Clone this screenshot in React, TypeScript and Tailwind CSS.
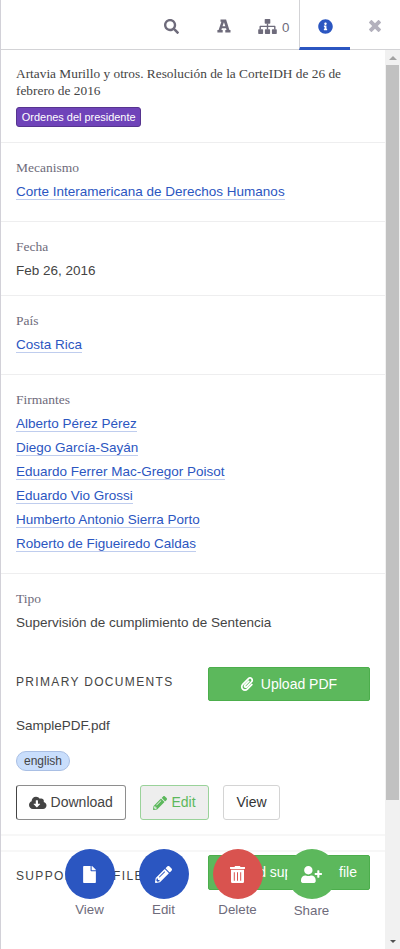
import type { ReactNode } from "react";
import {
  FaSearch, FaInfoCircle, FaPaperclip,
  FaCloudDownloadAlt, FaPencilAlt, FaFile, FaUserPlus,
} from "react-icons/fa";

const signers = [
  "Alberto Pérez Pérez",
  "Diego García-Sayán",
  "Eduardo Ferrer Mac-Gregor Poisot",
  "Eduardo Vio Grossi",
  "Humberto Antonio Sierra Porto",
  "Roberto de Figueiredo Caldas",
];

function FontIcon() {
  return (
    <svg viewBox="0 0 14 14" className="size-[14px]" fill="currentColor" fillRule="evenodd">
      <path d="M4.800 .5h4.300l3.300 10.500h1.100v2.500H8.300V11h1.200l-.5-1.700H4.900L4.400 11h1.300v2.500H.4V11h1.200L4.400 2.700h-.9V.5zM6.950 3.200L5.500 7.300h2.900z" />
    </svg>
  );
}

function TreeIcon() {
  return (
    <svg viewBox="0 0 19 15" className="h-[15px] w-[19px] shrink-0" fill="currentColor">
      <rect x="6.700" y="0" width="5.600" height="4.800" rx=".7" />
      <rect x=".2" y="10.200" width="4.900" height="4.800" rx=".7" />
      <rect x="6.900" y="10.200" width="5.200" height="4.800" rx=".7" />
      <rect x="13.900" y="10.200" width="4.900" height="4.800" rx=".7" />
      <path d="M8.800 4.500h1.400v2.200h6.300c.6 0 1 .4 1 1v2.800h-1.400V8.100h-5.900v2.400H8.800V8.100H2.900v2.400H1.500V7.700c0-.6.4-1 1-1h6.300z" />
    </svg>
  );
}

function CloseIcon() {
  return (
    <svg viewBox="0 0 384 512" className="h-4 w-3" fill="currentColor">
      <path d="M323.100 441l53.900-53.900c9.400-9.400 9.400-24.500 0-33.900L279.800 256l97.200-97.200c9.400-9.400 9.400-24.500 0-33.900L323.100 71c-9.400-9.400-24.500-9.400-33.900 0L192 168.200 94.800 71c-9.400-9.400-24.500-9.400-33.900 0L7 124.900c-9.400 9.400-9.400 24.500 0 33.900l97.200 97.200L7 353.200c-9.400 9.400-9.400 24.500 0 33.900L60.900 441c9.400 9.400 24.500 9.400 33.900 0l97.200-97.200 97.200 97.200c9.400 9.400 24.500 9.400 33.900 0z" />
    </svg>
  );
}

function TrashIcon() {
  return (
    <svg viewBox="0 0 15 17" className="h-[17px] w-[15px]" fill="currentColor" fillRule="evenodd">
      <path d="M.4 1h4.100l.4-.7C5 .1 5.200 0 5.400 0h4.200c.2 0 .4.1.5.3l.4.700h4.100c.2 0 .4.2.4.4v1.100c0 .2-.2.400-.4.400H.4C.2 2.900 0 2.700 0 2.500V1.400C0 1.200.2 1 .4 1z" />
      <path d="M1 3.800h13v11.600c0 .9-.7 1.600-1.600 1.600H2.600C1.700 17 1 16.300 1 15.400zM3.800 6.200v8.600h1V6.200zm3.200 0v8.600h1V6.200zm3.200 0v8.600h1V6.200z" />
    </svg>
  );
}

function Value({ children, link }: { children: ReactNode; link?: boolean }) {
  return (
    <div className="h-6 whitespace-nowrap text-[13.5px] leading-[17px] text-[#444]">
      {link ? (
        <a className="inline-block h-[17px] border-b border-[#bfcdee] leading-[17px] text-[#2b56c1]">{children}</a>
      ) : children}
    </div>
  );
}

function Field({ label, className, children }: { label: string; className: string; children: ReactNode }) {
  return (
    <div className={"shrink-0 pl-[15px] pr-4 pt-[16px] " + className}>
      <div className="mb-[6px] h-[18px] font-['Liberation_Serif',serif] text-[13.5px] leading-[18px] text-[#6e6b7b]">{label}</div>
      {children}
    </div>
  );
}

function Action({ label, circle, low, children }: { label: string; circle: string; low?: boolean; children: ReactNode }) {
  return (
    <div className="flex w-[50px] flex-col items-center">
      <div className={"flex size-[50px] items-center justify-center rounded-full text-white " + circle}>{children}</div>
      <div className={"text-[13.3px] leading-[17px] text-[#6e6b7b] " + (low ? "mt-[3px]" : "mt-[2px]")}>{label}</div>
    </div>
  );
}

export default function App() {
  return (
    <div className="relative flex h-[949px] w-[400px] flex-col overflow-hidden border-l border-[#d2d1d8] bg-white font-['Liberation_Sans',Arial,sans-serif] text-[#444]">
      <header className="flex h-[50px] shrink-0 border-b border-[#d3d3d6] text-[#6e6b7b]">
        <div className="ml-[144px] flex w-[53px] items-center justify-center pt-[3px]"><FaSearch size={15} /></div>
        <div className="flex w-[52px] items-center justify-center pt-[3px]"><FontIcon /></div>
        <div className="flex w-[49px] items-center justify-end gap-[5px] pr-[9.5px] pt-[4px]">
          <TreeIcon />
          <span className="pt-[2px] text-[13.3px] leading-[17px]">0</span>
        </div>
        <div className="flex h-[50px] w-[51px] items-center justify-center border-b-[3px] border-l border-b-[#2b56c1] border-l-[#d3d3d6] pt-[5px] text-[#2b56c1]">
          <FaInfoCircle size={15} />
        </div>
        <div className="flex w-[49px] items-center justify-center pt-[2px] text-[#b3b1bd]"><CloseIcon /></div>
      </header>

      <div className="flex min-h-0 flex-1">
        <main className="flex w-[384px] shrink-0 flex-col overflow-hidden">
          <div className="h-[93px] shrink-0 border-b border-[#eeeeef] pl-[15px] pt-[15px]">
            <h1 className="w-[345px] font-['Liberation_Serif',serif] text-[13.35px] leading-[17px]">
              Artavia Murillo y otros. Resolución de la CorteIDH de 26 de febrero de 2016
            </h1>
            <div className="mt-2 flex h-5 w-[125.400px] items-center justify-center whitespace-nowrap rounded-[3px] border border-[#56348f] bg-[#6f43b9] text-[10.95px] text-white">
              Ordenes del presidente
            </div>
          </div>
          <Field label="Mecanismo" className="h-[79px] border-b border-[#eeeeef]">
            <Value link>Corte Interamericana de Derechos Humanos</Value>
          </Field>
          <Field label="Fecha" className="h-[74px] border-b border-[#eeeeef]">
            <Value>Feb 26, 2016</Value>
          </Field>
          <Field label="País" className="h-[79px] border-b border-[#eeeeef]">
            <Value link>Costa Rica</Value>
          </Field>
          <Field label="Firmantes" className="h-[199px] border-b border-[#eeeeef]">
            {signers.map((name) => <Value key={name} link>{name}</Value>)}
          </Field>
          <Field label="Tipo" className="h-[93px]">
            <Value>Supervisión de cumplimiento de Sentencia</Value>
          </Field>

          <section className="h-[169px] shrink-0 border-b-2 border-[#f7f7f7] px-[15px]">
            <div className="flex h-[34px] items-center justify-between">
              <h2 className="pb-[4px] text-[12px] leading-[14px] tracking-[1.33px]">PRIMARY DOCUMENTS</h2>
              <div className="flex h-[34px] w-[162px] items-center justify-center gap-[7px] rounded-[2px] border border-[#4cae4c] bg-[#5cb85c] pr-px text-[14px] text-white">
                <FaPaperclip size={14} />Upload PDF
              </div>
            </div>
            <div className="mt-4 text-[13.5px] leading-[17px]">SamplePDF.pdf</div>
            <div className="mt-[16.500px] flex h-5 w-[54px] items-center justify-center rounded-full border border-[#a9bfe4] bg-[#c9defc] text-[12px]">english</div>
            <div className="mt-[14.500px] flex h-[35px] gap-[14px] text-[14px]">
              <div className="flex w-[110px] items-center justify-center gap-[4px] rounded-[3px] border border-[#8e8e8e] border-l-[#444]"><FaCloudDownloadAlt size={17.5} />Download</div>
              <div className="flex w-[69px] items-center justify-center gap-[4px] rounded-[3px] border border-[#9ad29a] bg-[#eee] text-[#5cb85c]"><FaPencilAlt size={14} />Edit</div>
              <div className="flex w-[57px] items-center justify-center rounded-[3px] border border-[#d4d4d4] text-[#333]">View</div>
            </div>
          </section>
          <section className="mt-[14px] shrink-0 border-t-2 border-[#f7f7f7] px-[15px] pt-[3.400px]">
            <div className="flex h-[35px] items-center justify-between">
              <h2 className="whitespace-nowrap pt-[6px] text-[12px] leading-[14px] tracking-[1.33px]">SUPPORTING FILES</h2>
              <div className="flex h-[35px] w-[162px] shrink-0 items-center justify-end whitespace-nowrap rounded-[2px] border border-[#4cae4c] bg-[#5cb85c] pr-[12px] text-[14px] text-white">
                Add supporting file
              </div>
            </div>
          </section>
        </main>
        <div className="flex w-[15px] flex-col items-center bg-[#f1f1f1]">
          <div className="flex h-[15px] items-center"><div className="border-x-[4px] border-b-[4px] border-x-transparent border-b-[#a3a3a3]" /></div>
          <div className="h-[735px] w-[13px] bg-[#c1c1c1]" />
          <div className="mt-auto flex h-[15px] items-center"><div className="border-x-[3px] border-t-[3px] border-x-transparent border-t-[#505050]" /></div>
        </div>
      </div>

      <nav className="absolute left-[63.500px] top-[849px] flex gap-6">
        <Action label="View" circle="bg-[#2b56c1]"><FaFile size={17} /></Action>
        <Action label="Edit" circle="bg-[#2b56c1]"><FaPencilAlt size={17} /></Action>
        <Action label="Delete" circle="bg-[#d9534f]"><TrashIcon /></Action>
        <Action label="Share" circle="bg-[#5cb85c]" low><FaUserPlus size={21} /></Action>
      </nav>
    </div>
  );
}
